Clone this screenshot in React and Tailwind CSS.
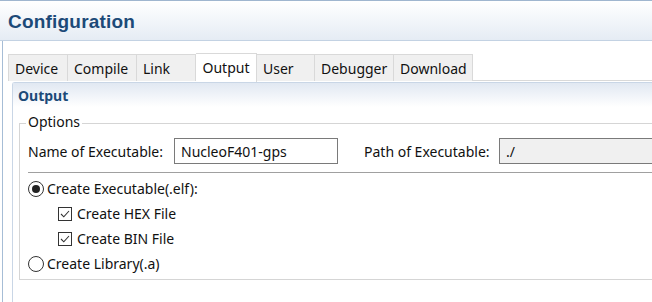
import React from 'react';

const tabs = [
  { label: 'Device', w: 60 },
  { label: 'Compile', w: 69 },
  { label: 'Link', w: 59 },
  { label: 'Output', w: 62, active: true },
  { label: 'User', w: 58 },
  { label: 'Debugger', w: 79 },
  { label: 'Download', w: 79 },
];

const Radio = ({ checked }) => (
  <span className="w-[16px] h-[16px] rounded-full border border-[#333] bg-white flex items-center justify-center shrink-0">
    {checked && <span className="w-[8px] h-[8px] rounded-full bg-[#222]" />}
  </span>
);

const Check = () => (
  <span className="w-[14px] h-[14px] border border-[#333] bg-white flex items-center justify-center shrink-0">
    <svg width="10" height="10" viewBox="0 0 10 10">
      <path d="M1 5l2.8 2.8L9 2" fill="none" stroke="#333" strokeWidth="1.1" />
    </svg>
  </span>
);

const App = () => {
  return (
    <div className="w-[652px] h-[302px] bg-white overflow-hidden text-[14px] text-[#111] font-['Segoe_UI','Noto_Sans',sans-serif]">
      {/* Header */}
      <div className="h-[41px] border-t border-[#9fb6cf] border-b border-b-[#c3d2e3] bg-gradient-to-b from-white to-[#e5ecf4] flex items-center px-[8px] pt-[3px]">
        <h1 className="text-[19px] font-bold text-[#1c4a78] font-['Liberation_Sans',sans-serif] tracking-[0.2px]">Configuration</h1>
      </div>

      <div className="ml-[2px] border-l border-[#a6bdd6] h-[261px] pt-[12px] pl-[5px]">
        {/* Tabs */}
        <div className="flex h-[28px] border-b border-[#d9d9d9]">
          <div className="flex bg-[#f0f0f0] h-[27px] mt-[1px] border-t border-l border-[#d9d9d9]">
            {tabs.map((t) =>
              t.active ? (
                <div
                  key={t.label}
                  className="bg-white border-r border-t border-[#d9d9d9] -mt-[2px] h-[29px] flex items-start pt-[3px] justify-center relative z-10"
                  style={{ width: t.w - 1 }}
                >
                  {t.label}
                </div>
              ) : (
                <div
                  key={t.label}
                  className="border-r border-[#d9d9d9] flex items-center pl-[6px]"
                  style={{ width: t.w - (t.label === 'Device' ? 1 : 0) }}
                >
                  {t.label}
                </div>
              )
            )}
          </div>
        </div>

        {/* Section */}
        <div className="ml-[4px] mt-[1px] border-l border-t border-[#c9d6e6] rounded-tl-[3px] h-[230px]">
          <div className="h-[24px] bg-gradient-to-b from-[#e1e8f2] to-white flex items-center pl-[5px]">
            <span className="font-bold text-[#1c4a78]">Output</span>
          </div>

          {/* Options group */}
          <div className="relative ml-[6px] mt-[16px] border border-r-0 border-[#d5d5d5] h-[157px] pl-[8px] pt-[7px]">
            <span className="absolute -top-[12px] left-[6px] bg-white px-[2px] leading-[20px]">Options</span>

            <div className="flex items-center h-[26px] mt-[7px]">
              <span className="w-[146px]">Name of Executable:</span>
              <div className="w-[164px] h-[26px] border border-[#7a7a7a] flex items-center px-[6px]">NucleoF401-gps</div>
              <span className="ml-[26px] w-[135px]">Path of Executable:</span>
              <div className="flex-1 h-[26px] border border-[#7a7a7a] border-r-0 bg-[#f0f0f0] flex items-center px-[6px]">./</div>
            </div>

            <div className="h-px bg-[#a0a0a0] mt-[8px]" />

            <div className="flex items-center gap-[3px] mt-[7px] h-[18px] leading-[18px]">
              <Radio checked />
              <span>Create Executable(.elf):</span>
            </div>
            <div className="flex items-center gap-[5px] mt-[7px] h-[18px] leading-[18px] pl-[30px]">
              <Check />
              <span>Create HEX File</span>
            </div>
            <div className="flex items-center gap-[5px] mt-[7px] h-[18px] leading-[18px] pl-[30px]">
              <Check />
              <span>Create BIN File</span>
            </div>
            <div className="flex items-center gap-[3px] mt-[7px] h-[18px] leading-[18px]">
              <Radio />
              <span>Create Library(.a)</span>
            </div>
          </div>
        </div>
      </div>
    </div>
  );
};

export default App;
